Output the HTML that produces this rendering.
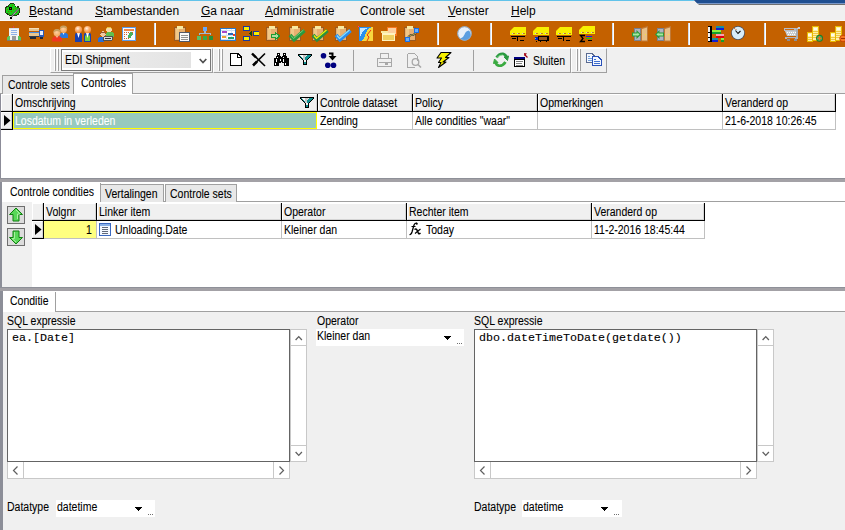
<!DOCTYPE html>
<html><head><meta charset="utf-8">
<style>
*{margin:0;padding:0;box-sizing:border-box}
html,body{width:845px;height:530px;overflow:hidden;background:#f0f0f0;font-family:"Liberation Sans",sans-serif;font-size:10.5px;color:#000;position:relative}
.a{position:absolute}
.t{position:absolute;white-space:nowrap;line-height:1;font-size:12px;transform:scaleX(.875);transform-origin:0 0;margin-top:-2px;-webkit-text-stroke:0.08px currentColor}
.m{position:absolute;white-space:nowrap;line-height:1;font-size:12px;color:#000}
.m u{text-decoration:underline;text-decoration-thickness:1px;text-underline-offset:1px}
.sep{position:absolute;top:23px;width:2px;height:22px;background:#fff;border-left:1px solid #d0dcec}
.hd{position:absolute;background:#f0f0f0;border-top:1px solid #fff;border-left:1px solid #fff;border-right:1px solid #000;border-bottom:1px solid #000}
.vline{position:absolute;width:1px;background:#c0c0c0}
.hline{position:absolute;height:1px;background:#c0c0c0}
</style></head><body>
<!-- title remnants -->
<div class="a" style="left:0;top:0;width:694px;height:1px;background:#61c3ea"></div>
<svg class="a" style="left:690px;top:0" width="155" height="6">
  <polygon points="4,0 155,0 155,5 9,5" fill="#707070"/>
  <polygon points="4,0 155,0 155,4 8,4" fill="#7a98c8"/>
  <polygon points="4,0 155,0 155,3 7,3" fill="#1f4f91"/>
</svg>

<!-- menu bar -->
<div class="a" style="left:0;top:20px;width:845px;height:1px;background:#fafafa"></div>
<div id="menu">
<div class="m" style="left:29px;top:5px"><u>B</u>estand</div>
<div class="m" style="left:95px;top:5px"><u>S</u>tambestanden</div>
<div class="m" style="left:201px;top:5px"><u>G</u>a naar</div>
<div class="m" style="left:265px;top:5px"><u>A</u>dministratie</div>
<div class="m" style="left:360px;top:5px">Controle set</div>
<div class="m" style="left:448px;top:5px"><u>V</u>enster</div>
<div class="m" style="left:511px;top:5px"><u>H</u>elp</div>
</div>

<!-- orange toolbar -->
<div class="a" style="left:0;top:21px;width:845px;height:26px;background:#c46100"></div>
<div class="a" style="left:0;top:47px;width:845px;height:1px;background:#fafafa"></div>
<div class="sep" style="left:154px"></div>
<div class="sep" style="left:437px"></div>
<div class="sep" style="left:490px"></div>
<div class="sep" style="left:612px"></div>
<div class="sep" style="left:688px"></div>
<div class="sep" style="left:764px"></div>
<div id="icons1">
<svg class="a" style="left:0;top:0" width="845" height="48" shape-rendering="crispEdges">
<!-- 1 building -->
<g>
<rect x="9" y="28" width="10" height="12" fill="#f2f2f2"/>
<rect x="9" y="28" width="10" height="1" fill="#d8dce4"/>
<rect x="11" y="30" width="6" height="1" fill="#8fb0e8"/>
<rect x="11" y="32" width="6" height="1" fill="#8fb0e8"/>
<rect x="11" y="34" width="6" height="1" fill="#8fb0e8"/>
<rect x="12" y="36" width="4" height="4" fill="#9a9a9a"/>
<rect x="13" y="26" width="1" height="2" fill="#e04040"/>
<rect x="7" y="37" width="3" height="3" fill="#5cc45c"/>
<rect x="18" y="37" width="3" height="3" fill="#5cc45c"/>
<rect x="8" y="36" width="2" height="1" fill="#5cc45c"/>
<rect x="18" y="36" width="2" height="1" fill="#5cc45c"/>
<rect x="7" y="40" width="14" height="1" fill="#7a7a7a"/>
</g>
<!-- 2 truck -->
<g>
<rect x="29" y="28" width="10" height="8" fill="#e7c48e"/>
<rect x="29" y="28" width="10" height="1" fill="#f3dcb8"/>
<rect x="29" y="31" width="10" height="1" fill="#c45c00"/>
<rect x="29" y="32" width="10" height="1" fill="#4a8ee0"/>
<rect x="39" y="30" width="5" height="7" fill="#2a5ab8"/>
<rect x="40" y="31" width="3" height="4" fill="#e8eef8"/>
<rect x="29" y="36" width="10" height="1" fill="#303848"/>
<rect x="30" y="37" width="6" height="2" fill="#1e2838"/>
<rect x="40" y="37" width="3" height="2" fill="#1e2838"/>
</g>
<!-- 3 people -->
<defs>
<radialGradient id="hd" cx="0.4" cy="0.35" r="0.7"><stop offset="0" stop-color="#fff4e8"/><stop offset="0.45" stop-color="#ffb070"/><stop offset="1" stop-color="#f08830"/></radialGradient>
<radialGradient id="sk" cx="0.45" cy="0.4" r="0.7"><stop offset="0" stop-color="#ffd0a0"/><stop offset="1" stop-color="#f0a050"/></radialGradient>
</defs>
<g shape-rendering="auto">
<path d="M59.5,38 L59.5,35 Q60,32.5 63.5,32.5 Q67.5,32.5 68,35 L68,38 Z" fill="#2a78e0"/>
<path d="M62.5,32.5 L64.5,32.5 L63.5,35 Z" fill="#e8f0ff"/>
<circle cx="63.5" cy="29.5" r="3.4" fill="url(#sk)"/>
<path d="M59.8,29.5 Q59.5,25.5 63.5,25.5 Q67.5,25.5 67.2,29.5 Q66,27.5 63.5,27.5 Q61,27.5 59.8,29.5Z" fill="#c8a060"/>
<path d="M52,41.5 L52,39 Q52.5,36 57,36 Q61.5,36 62,39 L62,41.5 Z" fill="#f03820"/>
<path d="M56,36 L58,36 L57,38 Z" fill="#f8e0e0"/>
<circle cx="57" cy="33" r="3.4" fill="url(#sk)"/>
<path d="M53.3,33 Q53,29 57,29 Q61,29 60.7,33 Q59.5,31 57,31 Q54.5,31 53.3,33Z" fill="#c8a060"/>
</g>
<!-- 4 two persons -->
<g shape-rendering="auto">
<path d="M75,42 L75,34.5 Q75,33 76.5,33 L80.5,33 Q82,33 82,34.5 L82,42 Z" fill="#1a40b0"/>
<path d="M77,33 L80,33 L78.5,38 Z" fill="#fff"/>
<circle cx="78.5" cy="29.6" r="3.6" fill="url(#hd)"/>
<path d="M84,42 L84,34.5 Q84,33 85.5,33 L89.5,33 Q91,33 91,34.5 L91,42 Z" fill="#1a40b0"/>
<rect x="85" y="35.5" width="5" height="5.5" fill="#70d040"/>
<path d="M86,33 L89,33 L87.5,38 Z" fill="#fff"/>
<circle cx="87.5" cy="29.6" r="3.6" fill="url(#hd)"/>
</g>
<!-- 5 people link -->
<g>
<circle cx="109" cy="29.5" r="3" fill="#f8d8a8"/>
<path d="M106,28 Q109,25 112,28 L112,29 Q109,27 106,29Z" fill="#e8c040"/>
<path d="M106,37 L106,33 Q110,31 114,33 L114,37Z" fill="#60c050"/>
<circle cx="103" cy="34" r="2.8" fill="#f0c8a0"/>
<path d="M100,33 Q103,30 106,33 L106,34 Q103,32 100,34Z" fill="#905838"/>
<path d="M98,42 L98,38 Q101,36 104,38 L104,42Z" fill="#2a70d8"/>
<rect x="103" y="36" width="10" height="5" rx="2" fill="#505050"/>
<rect x="104" y="37" width="8" height="3" rx="1" fill="#d8d8d8"/>
<rect x="105" y="38" width="6" height="1" fill="#303030"/>
</g>
<!-- 6 calendar -->
<g>
<rect x="122" y="27" width="14" height="14" fill="#5a9ae8"/>
<rect x="123" y="28" width="12" height="12" fill="#f8f8ff"/>
<rect x="124" y="29" width="10" height="2" fill="#f08848"/>
<g fill="#d86020">
<rect x="124" y="32" width="1" height="1"/><rect x="126" y="32" width="1" height="1"/><rect x="128" y="32" width="1" height="1"/><rect x="130" y="32" width="1" height="1"/><rect x="132" y="32" width="1" height="1"/>
<rect x="124" y="34" width="1" height="1"/><rect x="126" y="34" width="1" height="1"/><rect x="132" y="34" width="1" height="1"/>
<rect x="124" y="36" width="1" height="1"/><rect x="126" y="38" width="1" height="1"/><rect x="124" y="38" width="1" height="1"/><rect x="128" y="38" width="1" height="1"/>
</g>
<circle cx="129.5" cy="36.5" r="1.8" fill="#48b060"/>
<circle cx="131" cy="34" r="1.8" fill="#48b060"/>
</g>
<!-- separator 1 drawn separately -->
<!-- 7 clipboard doc -->
<g>
<rect x="174" y="27" width="12" height="14" fill="#9a5a20"/>
<rect x="175" y="28" width="10" height="12" fill="#e8b070"/><rect x="176" y="29" width="3" height="10" fill="#f0c888"/>
<rect x="177" y="26" width="6" height="3" fill="#f8e8a0"/>
<rect x="179" y="32" width="11" height="10" fill="#505868"/>
<rect x="180" y="33" width="9" height="8" fill="#fafafa"/>
<rect x="181" y="35" width="7" height="1" fill="#909090"/>
<rect x="181" y="37" width="7" height="1" fill="#909090"/>
<rect x="181" y="39" width="7" height="1" fill="#909090"/>
</g>
<!-- 8 org chart -->
<g>
<rect x="203" y="27" width="4" height="4" fill="#6aa8f8"/>
<rect x="204" y="31" width="2" height="2" fill="#a0b8d0"/>
<rect x="199" y="33" width="12" height="1" fill="#a0b8d0"/>
<rect x="199" y="33" width="1" height="2" fill="#a0b8d0"/>
<rect x="210" y="33" width="1" height="2" fill="#a0b8d0"/>
<rect x="197" y="36" width="4" height="4" fill="#58c068"/>
<rect x="203" y="36" width="4" height="4" fill="#38a848"/>
<rect x="209" y="36" width="4" height="4" fill="#289038"/>
</g>
<!-- 9 schedule -->
<g>
<rect x="220" y="28" width="16" height="13" fill="#2a78c8"/>
<rect x="221" y="29" width="14" height="11" fill="#ffffff"/>
<rect x="221" y="30" width="14" height="1" fill="#c8dcf0"/>
<rect x="221" y="35" width="14" height="1" fill="#c8dcf0"/><rect x="221" y="39" width="14" height="1" fill="#c8dcf0"/><rect x="226" y="29" width="1" height="11" fill="#d8e6f4"/><rect x="231" y="29" width="1" height="11" fill="#d8e6f4"/>
<rect x="222" y="31" width="5" height="2" fill="#a848c8"/>
<rect x="228" y="33" width="5" height="2" fill="#2a68b8"/>
<rect x="233" y="34" width="2" height="2" fill="#f04020"/>
<rect x="222" y="36" width="4" height="2" fill="#f0a030"/>
<rect x="228" y="37" width="6" height="2" fill="#20a068"/>
</g>
<!-- 10 yellow blocks -->
<g>
<rect x="243" y="26" width="7" height="5" fill="#1a38a0"/>
<rect x="244" y="27" width="5" height="3" fill="#f8f000"/>
<rect x="243" y="36" width="7" height="5" fill="#1a38a0"/>
<rect x="244" y="37" width="5" height="3" fill="#f8f000"/>
<rect x="253" y="31" width="6" height="5" fill="#1a38a0"/>
<rect x="254" y="32" width="5" height="3" fill="#f8f000"/>
<path d="M249,33.5 L252,31 L252,36 Z" fill="#104810"/>
</g>
<!-- 11 clipboard arrow -->
<g>
<rect x="266" y="27" width="12" height="14" fill="#9a5a20"/>
<rect x="267" y="28" width="10" height="12" fill="#e8b070"/><rect x="268" y="29" width="3" height="10" fill="#f0c888"/>
<rect x="269" y="26" width="6" height="3" fill="#f8e8a0"/>
<path d="M271,34 L275,34 L275,32 L281,36 L275,40.5 L275,38 L271,38 Z" fill="#1e9a30"/>
<path d="M272,35 L276,35 L276,34 L279,36 L276,38 L276,37 L272,37 Z" fill="#a8e0a0"/>
</g>
<!-- 12-14 clipboard checks -->
<g>
<rect x="289" y="27" width="12" height="14" fill="#9a5a20"/>
<rect x="290" y="28" width="10" height="12" fill="#e8b070"/><rect x="291" y="29" width="3" height="10" fill="#f0c888"/>
<rect x="292" y="26" width="6" height="3" fill="#f8e8a0"/>
<path d="M290,35 L294,39.5 L304.5,30.5" stroke="#2a9a40" stroke-width="3.8" fill="none" shape-rendering="auto"/>
<path d="M291,35.5 L293.5,38.5 L303.5,30" stroke="#78d078" stroke-width="1" fill="none" shape-rendering="auto"/>
</g>
<g>
<rect x="312" y="27" width="12" height="14" fill="#9a5a20"/>
<rect x="313" y="28" width="10" height="12" fill="#e8b070"/><rect x="314" y="29" width="3" height="10" fill="#f0c888"/>
<rect x="315" y="26" width="6" height="3" fill="#f8e8a0"/>
<path d="M313,35 L317,39.5 L327.5,30.5" stroke="#2a9040" stroke-width="3.8" fill="none" shape-rendering="auto"/>
<path d="M314,35.5 L316.5,38.5 L326.5,30" stroke="#f8f000" stroke-width="1.2" fill="none" shape-rendering="auto"/>
</g>
<g>
<rect x="335" y="27" width="12" height="14" fill="#9a5a20"/>
<rect x="336" y="28" width="10" height="12" fill="#e8b070"/><rect x="337" y="29" width="3" height="10" fill="#f0c888"/>
<rect x="338" y="26" width="6" height="3" fill="#f8e8a0"/>
<path d="M336,35 L340,39.5 L350.5,30.5" stroke="#2a8ef0" stroke-width="3.8" fill="none" shape-rendering="auto"/>
<path d="M337,35.5 L339.5,38.5 L349.5,30" stroke="#90e0f8" stroke-width="1.2" fill="none" shape-rendering="auto"/>
</g>
<!-- 15 blue/yellow -->
<g>
<rect x="359" y="27" width="14" height="14" fill="#f8d840"/>
<path d="M359,27 L373,27 Q367,28 366,33 Q364,39 362,41 L359,41 Z" fill="#2a90f0"/>
<path d="M360,28 L368,28 Q364,29 362,33 L360,37 Z" fill="#c8e8ff"/>
<path d="M371,30 L367,35 L369,37 L367,41" stroke="#f03010" stroke-width="1" fill="none" shape-rendering="auto"/>
<rect x="358" y="26" width="1" height="1" fill="#ff20c0"/>
</g>
<!-- 16 folder -->
<g>
<rect x="387" y="27" width="10" height="9" fill="#f87820"/>
<rect x="388" y="28" width="8" height="6" fill="#fcd0a0"/>
<rect x="381" y="31" width="7" height="2" fill="#f8e8a0"/>
<rect x="382" y="33" width="13" height="8" fill="#fff4c0"/>
<rect x="383" y="35" width="11" height="5" fill="#f0d060"/>
</g>
<!-- 17 clipboard path -->
<g>
<rect x="404" y="27" width="12" height="14" fill="#9a5a20"/>
<rect x="405" y="28" width="10" height="12" fill="#e8b070"/><rect x="406" y="29" width="3" height="10" fill="#f0c888"/>
<rect x="407" y="26" width="6" height="3" fill="#f8e8a0"/>
<path d="M408,37 L411,35 L413,35 L416,33" stroke="#283048" stroke-width="2" fill="none" shape-rendering="auto"/>
<path d="M408,37 L411,35 L413,35 L416,33" stroke="#f8d030" stroke-width="0.8" fill="none" shape-rendering="auto"/>
<rect x="405" y="37" width="5" height="5" fill="#1a70e8"/>
<rect x="406" y="38" width="3" height="3" fill="#6ab0f8"/>
<rect x="414" y="28" width="5" height="5" fill="#1a70e8"/>
<rect x="415" y="29" width="3" height="3" fill="#6ab0f8"/>
</g>
<!-- 18 globe -->
<g shape-rendering="auto">
<circle cx="464.5" cy="33.5" r="7.2" fill="#a8b8c8"/>
<circle cx="464.5" cy="33.5" r="6.5" fill="#e8f0f8"/>
<path d="M460.5,38.5 Q463.5,37.5 464.5,34.5 Q465.5,31 469,30.5 Q471.5,33.5 470.5,37 Q468.5,40.3 464.5,40.5 Q462,40.2 460.5,38.5Z" fill="#5a9ee0"/><circle cx="464.5" cy="33.5" r="6.8" fill="none" stroke="#90a8c0" stroke-width="0.8"/>
</g>
</svg>
<svg class="a" style="left:0;top:0" width="845" height="48" shape-rendering="crispEdges">
<!-- 19 awning table -->
<g>
<path d="M510,31 L514,27 L526,27 L526,35 L510,35 Z" fill="#f8f000" shape-rendering="auto"/>
<rect x="512" y="33" width="1" height="1" fill="#c8c8e8"/><rect x="513" y="33" width="2" height="1" fill="#c87820"/>
<rect x="517" y="33" width="1" height="1" fill="#c8c8e8"/><rect x="518" y="33" width="2" height="1" fill="#c87820"/>
<rect x="522" y="33" width="1" height="1" fill="#c8c8e8"/><rect x="523" y="33" width="2" height="1" fill="#c87820"/>
<rect x="511" y="36" width="14" height="1" fill="#000"/>
<rect x="512" y="38" width="4" height="1" fill="#000"/>
<rect x="517" y="36" width="1" height="5" fill="#000"/>
<rect x="520" y="40" width="4" height="1" fill="#000"/>
</g>
<!-- 20 awning truck -->
<g>
<path d="M533,31 L537,27 L549,27 L549,35 L533,35 Z" fill="#f8f000" shape-rendering="auto"/>
<rect x="535" y="33" width="1" height="1" fill="#c8c8e8"/><rect x="536" y="33" width="2" height="1" fill="#c87820"/>
<rect x="540" y="33" width="1" height="1" fill="#c8c8e8"/><rect x="541" y="33" width="2" height="1" fill="#c87820"/>
<rect x="545" y="33" width="1" height="1" fill="#c8c8e8"/><rect x="546" y="33" width="2" height="1" fill="#c87820"/>
<rect x="538" y="36" width="11" height="5" fill="#000"/>
<rect x="539" y="37" width="8" height="3" fill="#9a5820"/>
<rect x="535" y="37" width="3" height="3" fill="#0a20c0"/>
<rect x="535" y="38" width="1" height="1" fill="#20e0f0"/>
<rect x="536" y="41" width="1" height="1" fill="#000"/><rect x="540" y="41" width="1" height="1" fill="#000"/><rect x="546" y="41" width="1" height="1" fill="#000"/>
</g>
<!-- 21 awning table -->
<g>
<path d="M556,31 L560,27 L572,27 L572,35 L556,35 Z" fill="#f8f000" shape-rendering="auto"/>
<rect x="558" y="33" width="1" height="1" fill="#c8c8e8"/><rect x="559" y="33" width="2" height="1" fill="#c87820"/>
<rect x="563" y="33" width="1" height="1" fill="#c8c8e8"/><rect x="564" y="33" width="2" height="1" fill="#c87820"/>
<rect x="568" y="33" width="1" height="1" fill="#c8c8e8"/><rect x="569" y="33" width="2" height="1" fill="#c87820"/>
<rect x="557" y="36" width="14" height="1" fill="#000"/>
<rect x="558" y="38" width="4" height="1" fill="#000"/>
<rect x="563" y="36" width="1" height="5" fill="#000"/>
<rect x="566" y="40" width="4" height="1" fill="#000"/>
</g>
<!-- 22 awning sigma -->
<g>
<path d="M579,30 L583,26 L595,26 L595,34 L579,34 Z" fill="#f8f000" shape-rendering="auto"/>
<rect x="581" y="32" width="1" height="1" fill="#c8c8e8"/><rect x="582" y="32" width="2" height="1" fill="#c87820"/>
<rect x="586" y="32" width="1" height="1" fill="#c8c8e8"/><rect x="587" y="32" width="2" height="1" fill="#c87820"/>
<rect x="591" y="32" width="1" height="1" fill="#c8c8e8"/><rect x="592" y="32" width="2" height="1" fill="#c87820"/>
<path d="M585,35.5 L580.5,35.5 L583,38.5 L580.5,41.5 L585,41.5" stroke="#000" stroke-width="1.3" fill="none" shape-rendering="auto"/>
<rect x="586" y="36" width="6" height="1" fill="#1020f0"/>
<rect x="586" y="38" width="6" height="1" fill="#10d010"/>
<rect x="588" y="40" width="4" height="1" fill="#000"/>
</g>
<!-- 23 door in -->
<g>
<rect x="634" y="28" width="7" height="13" fill="#7a8290"/>
<rect x="635" y="29" width="5" height="11" fill="#b0b4c0"/>
<path d="M641,28 L648,26 L648,41.5 L641,41.5 Z" fill="#c07a38" shape-rendering="auto"/>
<path d="M642,29 L647,27.5 L647,40.5 L642,40.5 Z" fill="#e8c088" shape-rendering="auto"/>
<rect x="645" y="34" width="1" height="1" fill="#f8e040"/>
<path d="M632,32.5 L636.5,32.5 L636.5,30 L641,34.5 L636.5,39 L636.5,36.5 L632,36.5 Z" fill="#2a9a3a" shape-rendering="auto"/>
<path d="M633,33.5 L637.5,33.5 L637.5,32.5 L639.5,34.5 L637.5,36 L637.5,35.5 L633,35.5 Z" fill="#a8e8a0" shape-rendering="auto"/>
</g>
<!-- 24 door out -->
<g>
<rect x="657" y="28" width="7" height="13" fill="#7a8290"/>
<rect x="658" y="29" width="5" height="11" fill="#b0b4c0"/>
<path d="M664,28 L671,26 L671,41.5 L664,41.5 Z" fill="#c07a38" shape-rendering="auto"/>
<path d="M665,29 L670,27.5 L670,40.5 L665,40.5 Z" fill="#e8c088" shape-rendering="auto"/>
<rect x="668" y="34" width="1" height="1" fill="#f8e040"/>
<path d="M664,32.5 L659.5,32.5 L659.5,30 L655,34.5 L659.5,39 L659.5,36.5 L664,36.5 Z" fill="#2a9a3a" shape-rendering="auto"/>
<path d="M663,33.5 L658.5,33.5 L658.5,32.5 L656.5,34.5 L658.5,36 L658.5,35.5 L663,35.5 Z" fill="#a8e8a0" shape-rendering="auto"/>
</g>
<!-- 25 gantt -->
<g>
<rect x="708" y="26" width="4" height="16" fill="#000"/>
<rect x="708" y="27" width="2" height="14" fill="#f0f0f0"/>
<rect x="708" y="32" width="2" height="1" fill="#000"/><rect x="708" y="37" width="2" height="1" fill="#000"/>
<rect x="716" y="26" width="8" height="2" fill="#1890a0"/><rect x="716" y="28" width="8" height="2" fill="#1020d0"/>
<rect x="712" y="30" width="9" height="2" fill="#90f040"/><rect x="712" y="32" width="9" height="2" fill="#10a030"/>
<rect x="716" y="34" width="8" height="2" fill="#f8a0b0"/><rect x="716" y="36" width="8" height="2" fill="#e00010"/>
<rect x="712" y="38" width="6" height="2" fill="#1890a0"/><rect x="712" y="40" width="6" height="2" fill="#1020d0"/>
<rect x="721" y="38" width="3" height="2" fill="#90f040"/><rect x="721" y="40" width="3" height="2" fill="#10a030"/>
</g>
<!-- 26 clock -->
<g shape-rendering="auto">
<circle cx="738" cy="33" r="7" fill="#485060"/>
<circle cx="738" cy="33" r="6.2" fill="#d8ecf8"/>
<path d="M735.5,30.5 L738,33.5 L740.5,31" stroke="#101010" stroke-width="1.1" fill="none"/>
<circle cx="734.5" cy="28.5" r="0.6" fill="#e06010"/>
<circle cx="736" cy="29.5" r="0.6" fill="#e06010"/>
</g>
<!-- 27 cart -->
<g shape-rendering="crispEdges">
<rect x="784" y="28" width="12" height="3" fill="#b8bcc4"/>
<rect x="785" y="29" width="9" height="1" fill="#d06a10"/>
<path d="M785,31 L797,31 L797,36 L787,36 Z" fill="#c8ccd0" shape-rendering="auto"/>
<g fill="#ffffff"><rect x="787" y="32" width="1" height="1"/><rect x="789" y="32" width="1" height="1"/><rect x="791" y="32" width="1" height="1"/><rect x="793" y="32" width="1" height="1"/><rect x="795" y="32" width="1" height="1"/>
<rect x="788" y="34" width="1" height="1"/><rect x="790" y="34" width="1" height="1"/><rect x="792" y="34" width="1" height="1"/><rect x="794" y="34" width="1" height="1"/></g>
<rect x="796" y="28" width="2" height="10" fill="#a8acb4"/>
<rect x="797" y="27" width="3" height="2" fill="#c8ccd4"/>
<rect x="797" y="27" width="1" height="1" fill="#e07020"/>
<rect x="785" y="37" width="13" height="2" fill="#b0b4bc"/>
<rect x="787" y="38" width="8" height="1" fill="#d06a10"/>
<rect x="787" y="39" width="3" height="2" fill="#8a8e98"/>
<rect x="794" y="39" width="3" height="2" fill="#8a8e98"/>
</g>
<!-- 28 coins green -->
<g>
<rect x="812" y="26" width="7" height="15" fill="#e8b800"/>
<rect x="813" y="27" width="5" height="13" fill="#fff0a8"/>
<rect x="814" y="28" width="3" height="2" fill="#fffce8"/>
<rect x="813" y="31" width="5" height="1" fill="#f0c840"/><rect x="813" y="33" width="5" height="1" fill="#f0c840"/><rect x="813" y="35" width="5" height="1" fill="#f0c840"/><rect x="813" y="37" width="5" height="1" fill="#f0c840"/>
<rect x="807" y="32" width="6" height="10" fill="#e8b800"/>
<rect x="808" y="33" width="4" height="8" fill="#fff0a8"/>
<rect x="808" y="34" width="3" height="2" fill="#fffce8"/>
<rect x="808" y="37" width="4" height="1" fill="#f0c840"/><rect x="808" y="39" width="4" height="1" fill="#f0c840"/>
</g>
<g shape-rendering="auto">
<circle cx="819.5" cy="38.3" r="3.5" fill="#1a7a2a"/>
<circle cx="819.5" cy="38.3" r="2.6" fill="#48a858"/>
<path d="M819.5,36.3 L819.5,40.3 M817.5,38.3 L821.5,38.3" stroke="#f07020" stroke-width="1.2"/>
</g>
<!-- 29 coins orange -->
<g>
<rect x="835" y="26" width="7" height="15" fill="#e8b800"/>
<rect x="836" y="27" width="5" height="13" fill="#fff0a8"/>
<rect x="837" y="28" width="3" height="2" fill="#fffce8"/>
<rect x="836" y="31" width="5" height="1" fill="#f0c840"/><rect x="836" y="33" width="5" height="1" fill="#f0c840"/><rect x="836" y="35" width="5" height="1" fill="#f0c840"/><rect x="836" y="37" width="5" height="1" fill="#f0c840"/>
<rect x="830" y="32" width="6" height="10" fill="#e8b800"/>
<rect x="831" y="33" width="4" height="8" fill="#fff0a8"/>
<rect x="831" y="34" width="3" height="2" fill="#fffce8"/>
<rect x="831" y="37" width="4" height="1" fill="#f0c840"/><rect x="831" y="39" width="4" height="1" fill="#f0c840"/>
</g>
<g shape-rendering="auto">
<circle cx="843" cy="38.5" r="3.6" fill="#c84000"/>
<circle cx="843" cy="38.5" r="2.7" fill="#f87820"/>
<path d="M841,38.5 L845,38.5" stroke="#a83000" stroke-width="1"/>
</g>
<!-- menu app icon (maple leaf) -->
<g shape-rendering="crispEdges">
<path d="M9,4 L10,4 L10,3 L14,3 L14,4 L15,4 L15,6 L16,6 L16,7 L17,7 L17,6 L19,6 L19,8 L20,8 L20,13 L19,13 L19,15 L17,15 L17,16 L13,16 L13,15 L12,15 L12,16 L9,16 L9,15 L7,15 L7,14 L6,14 L6,13 L5,13 L5,7 L6,7 L6,6 L8,6 L8,5 L9,5 Z" fill="#203a10"/>
<path d="M10,4 L14,4 L14,5 L15,5 L15,7 L17,7 L17,8 L19,8 L19,13 L18,13 L18,14 L17,14 L17,15 L13,15 L13,14 L12,14 L12,15 L9,15 L9,14 L8,14 L8,13 L7,13 L7,13 L6,13 L6,8 L7,8 L7,7 L9,7 L9,5 L10,5 Z" fill="#18d018"/>
<rect x="9" y="7" width="3" height="3" fill="#000"/>
<rect x="10" y="8" width="1" height="1" fill="#806000"/>
<g fill="#7a6a00">
<rect x="8" y="11" width="1" height="1"/><rect x="11" y="11" width="1" height="1"/><rect x="13" y="9" width="1" height="1"/>
<rect x="7" y="9" width="1" height="1"/><rect x="12" y="5" width="1" height="1"/><rect x="16" y="12" width="1" height="1"/>
<rect x="9" y="13" width="1" height="1"/><rect x="15" y="8" width="1" height="1"/><rect x="17" y="10" width="1" height="1"/>
</g>
</g>
<g shape-rendering="auto">
<path d="M11.5,16.5 L18.5,9" stroke="#404040" stroke-width="1.8"/>
<path d="M11.5,16.5 L18.5,9" stroke="#f0f0f8" stroke-width="0.9" stroke-dasharray="1.2,0.5"/>
</g>
<rect x="10" y="17" width="2" height="2" fill="#000"/>
</svg>
</div>

<!-- toolbar 2 -->
<div class="a" style="left:50px;top:48px;width:163px;height:25px;border-top:1px solid #fff;border-left:1px solid #fff;border-bottom:1px solid #a0a0a0;border-right:1px solid #a0a0a0"></div>
<div class="a" style="left:54px;top:49px;width:1px;height:21px;background:#fff"></div><div class="a" style="left:55px;top:49px;width:1px;height:22px;background:#a0a0a0"></div>
<div class="a" style="left:57px;top:49px;width:1px;height:21px;background:#fff"></div><div class="a" style="left:58px;top:49px;width:1px;height:22px;background:#a0a0a0"></div>
<div class="a" style="left:61px;top:49px;width:150px;height:22px;border:1px solid #7a7a7a;background:#fff"></div>
<div class="a" style="left:63px;top:52px;width:128px;height:16px;background:linear-gradient(90deg,#f0f0f0,#e3e3e3)"></div>
<div class="t" style="left:65px;top:56px">EDI Shipment</div>
<svg class="a" style="left:199px;top:58px" width="9" height="7"><path d="M0.7,1 L4,4.6 L7.3,1" stroke="#505050" stroke-width="1.7" fill="none"/></svg>

<div class="a" style="left:213px;top:48px;width:358px;height:25px;border-top:1px solid #fff;border-left:1px solid #fff;border-bottom:1px solid #a0a0a0;border-right:1px solid #a0a0a0"></div>
<div class="a" style="left:218px;top:49px;width:1px;height:21px;background:#fff"></div><div class="a" style="left:219px;top:49px;width:1px;height:22px;background:#a0a0a0"></div>
<div class="a" style="left:221px;top:49px;width:1px;height:21px;background:#fff"></div><div class="a" style="left:222px;top:49px;width:1px;height:22px;background:#a0a0a0"></div>
<div class="a" style="left:353px;top:50px;width:1px;height:21px;background:#a0a0a0"></div>
<div class="a" style="left:473px;top:50px;width:1px;height:21px;background:#a0a0a0"></div>
<div class="t" style="left:533px;top:57px">Sluiten</div>

<div class="a" style="left:571px;top:48px;width:36px;height:25px;border-top:1px solid #fff;border-left:1px solid #fff;border-bottom:1px solid #a0a0a0;border-right:1px solid #a0a0a0"></div>
<div class="a" style="left:576px;top:49px;width:1px;height:21px;background:#fff"></div><div class="a" style="left:577px;top:49px;width:1px;height:22px;background:#a0a0a0"></div>
<div class="a" style="left:579px;top:49px;width:1px;height:21px;background:#fff"></div><div class="a" style="left:580px;top:49px;width:1px;height:22px;background:#a0a0a0"></div>
<div id="icons2">
<svg class="a" style="left:0;top:0" width="845" height="80" shape-rendering="crispEdges">
<!-- new doc -->
<path d="M230.5,53.5 L238,53.5 L241.5,57 L241.5,65.5 L230.5,65.5 Z" fill="#fff" stroke="#000" stroke-width="1"/>
<path d="M237.5,53.5 L237.5,57.5 L241.5,57.5" fill="none" stroke="#000" stroke-width="1"/>
<!-- X -->
<g shape-rendering="auto">
<path d="M252.5,54 L265,66" stroke="#000" stroke-width="1.6"/>
<path d="M252,53.5 L256,57.5" stroke="#000" stroke-width="2.4"/>
<path d="M265,53.5 L253.5,65" stroke="#000" stroke-width="1.6"/>
<path d="M257,61.5 L253,65.5" stroke="#000" stroke-width="2.6"/>
</g>
<!-- binoculars -->
<g fill="#000">
<rect x="277" y="53" width="3" height="3"/><rect x="283" y="53" width="3" height="3"/>
<rect x="276" y="56" width="5" height="2"/><rect x="282" y="56" width="5" height="2"/>
<rect x="274" y="58" width="7" height="5"/><rect x="282" y="58" width="7" height="5"/><rect x="284" y="63" width="5" height="3"/>
<rect x="281" y="57" width="1" height="5"/>
<rect x="274" y="63" width="5" height="3"/>
</g>
<g fill="#fff">
<rect x="278" y="54" width="1" height="1"/><rect x="284" y="54" width="1" height="1"/>
<rect x="277" y="57" width="1" height="1"/><rect x="283" y="57" width="1" height="1"/>
<rect x="276" y="59" width="1" height="3"/><rect x="280" y="59" width="1" height="2"/><rect x="283" y="59" width="1" height="3"/>
<rect x="275" y="63" width="1" height="2"/><rect x="285" y="63" width="1" height="2"/>
</g>
<!-- filter -->
<g><rect x="298" y="54" width="14" height="1" fill="#000"/><rect x="298" y="55" width="1" height="1" fill="#000"/><rect x="299" y="55" width="1" height="1" fill="#109090"/><rect x="300" y="55" width="3" height="1" fill="#fafafa"/><rect x="303" y="55" width="3" height="1" fill="#c8c8c8"/><rect x="306" y="55" width="1" height="1" fill="#f0e8e8"/><rect x="307" y="55" width="4" height="1" fill="#109090"/><rect x="311" y="55" width="1" height="1" fill="#000"/><rect x="299" y="56" width="1" height="1" fill="#000"/><rect x="300" y="56" width="1" height="1" fill="#109090"/><rect x="301" y="56" width="2" height="1" fill="#fafafa"/><rect x="303" y="56" width="2" height="1" fill="#c8c8c8"/><rect x="305" y="56" width="1" height="1" fill="#e8e0e0"/><rect x="306" y="56" width="4" height="1" fill="#109090"/><rect x="310" y="56" width="1" height="1" fill="#000"/><rect x="300" y="57" width="1" height="1" fill="#000"/><rect x="301" y="57" width="1" height="1" fill="#109090"/><rect x="302" y="57" width="1" height="1" fill="#fafafa"/><rect x="303" y="57" width="2" height="1" fill="#c8c8c8"/><rect x="305" y="57" width="4" height="1" fill="#109090"/><rect x="309" y="57" width="1" height="1" fill="#000"/><rect x="301" y="58" width="1" height="1" fill="#000"/><rect x="302" y="58" width="1" height="1" fill="#109090"/><rect x="303" y="58" width="2" height="1" fill="#c8c8c8"/><rect x="305" y="58" width="3" height="1" fill="#109090"/><rect x="308" y="58" width="1" height="1" fill="#000"/><rect x="302" y="59" width="1" height="1" fill="#000"/><rect x="303" y="59" width="2" height="1" fill="#d0d0d0"/><rect x="305" y="59" width="2" height="1" fill="#109090"/><rect x="307" y="59" width="1" height="1" fill="#000"/><rect x="303" y="60" width="1" height="1" fill="#000"/><rect x="304" y="60" width="2" height="1" fill="#f8f8f8"/><rect x="306" y="60" width="1" height="1" fill="#000"/><rect x="303" y="61" width="1" height="1" fill="#000"/><rect x="304" y="61" width="2" height="1" fill="#f0f0f0"/><rect x="306" y="61" width="1" height="1" fill="#000"/><rect x="303" y="62" width="1" height="1" fill="#000"/><rect x="304" y="62" width="2" height="1" fill="#109090"/><rect x="306" y="62" width="1" height="1" fill="#000"/><rect x="303" y="63" width="1" height="1" fill="#000"/><rect x="304" y="63" width="2" height="1" fill="#109090"/><rect x="306" y="63" width="1" height="1" fill="#000"/><rect x="303" y="64" width="4" height="1" fill="#000"/></g>
<!-- dots arrow -->
<g shape-rendering="auto">
<circle cx="323.5" cy="55.7" r="2.8" fill="#000080"/>
<circle cx="327.8" cy="65.2" r="2.8" fill="#000080"/>
<circle cx="333.5" cy="65.2" r="2.8" fill="#000080"/>
<path d="M329,52.5 L333.5,52.5 L333.5,56 L336.5,56 L332.5,60.5 L328.5,56 L331.5,56 L331.5,54.5 L329,54.5 Z" fill="#000"/>
</g>
<!-- separator handled in html -->
<!-- printer gray -->
<g fill="none" stroke="#a8a8a8" stroke-width="1">
<path d="M380.5,53.5 L388.5,53.5 L388.5,58.5 L380.5,58.5 Z"/>
<path d="M377.5,58.5 L391.5,58.5 L391.5,66.5 L377.5,66.5 Z"/>
<path d="M378.5,62.5 L390.5,62.5"/>
</g>
<rect x="385" y="63" width="3" height="2" fill="#a8a8a8"/>
<!-- preview gray -->
<g fill="none" stroke="#a8a8a8" stroke-width="1">
<path d="M407.5,53.5 L414.5,53.5 L417.5,56.5 L417.5,61"/>
<path d="M407.5,53.5 L407.5,67.5 L415,67.5"/>
</g>
<g shape-rendering="auto">
<circle cx="415.5" cy="62" r="3.3" fill="none" stroke="#a8a8a8" stroke-width="1.3"/>
<path d="M418,64.5 L421,67.5" stroke="#a8a8a8" stroke-width="1.6"/>
</g>
<!-- lightning -->
<g shape-rendering="auto">
<path d="M441,52.5 L451,52.5 L445.5,57.5 L449,57.5 L443,62 L446,62 L438.5,67.5 L441,62.5 L438.5,62.5 L441.5,58 L437,58 Z" fill="#f8f000" stroke="#000" stroke-width="1.1" stroke-linejoin="round"/>
</g>
<!-- refresh -->
<g shape-rendering="auto">
<path d="M496.5,57.5 Q499,53.5 503,53.8 Q506,54.5 506.5,57.5" fill="none" stroke="#2a9a40" stroke-width="2.6"/>
<path d="M504,57 L508.5,56 L507.5,60.5 Z" fill="#2a9a40" stroke="#2a9a40" stroke-width="1"/>
<path d="M505.5,62 Q503,66 499,65.8 Q496,65 495.5,62" fill="none" stroke="#3aaa40" stroke-width="2.6"/>
<path d="M498,62.5 L493.5,63.5 L494.5,59 Z" fill="#3aaa40" stroke="#3aaa40" stroke-width="1"/>
<path d="M497,57.5 Q499,54.8 503,55" fill="none" stroke="#90e090" stroke-width="0.8"/>
</g>
<!-- window close -->
<g>
<rect x="514" y="57" width="11" height="10" fill="#000"/>
<rect x="515" y="60" width="9" height="6" fill="#fff"/>
<rect x="514" y="57" width="11" height="2" fill="#000080"/>
<rect x="516" y="61" width="7" height="1" fill="#808080"/>
<rect x="516" y="63" width="6" height="1" fill="#808080"/>
<rect x="516" y="65" width="7" height="1" fill="#808080"/>
</g>
<g shape-rendering="auto">
<path d="M527.5,57.5 L524.5,54.5" stroke="#a00010" stroke-width="1.3"/>
<path d="M524,53 L527,53.5 L524.5,56 Z" fill="#a00010"/>
</g>
<!-- copy -->
<g>
<path d="M586.5,53.5 L592,53.5 L595,56.5 L595,62.5 L586.5,62.5 Z" fill="#f4f8ff" stroke="#5a6a90" stroke-width="1"/>
<rect x="588" y="56" width="2" height="1" fill="#70a0e0"/>
<rect x="588" y="58" width="5" height="1" fill="#70a0e0"/>
<rect x="588" y="60" width="5" height="1" fill="#70a0e0"/>
<path d="M592.5,56.5 L598,56.5 L601,59.5 L601,65.5 L592.5,65.5 Z" fill="#f4f8ff" stroke="#2850b8" stroke-width="1"/>
<rect x="594" y="59" width="2" height="1" fill="#4070d0"/>
<rect x="594" y="61" width="6" height="1" fill="#4070d0"/>
<rect x="594" y="63" width="6" height="1" fill="#4070d0"/>
</g>
</svg>
</div>

<!-- left MDI edge -->
<div class="a" style="left:0;top:94px;width:1px;height:436px;background:#8c8c98"></div>

<!-- tabs 1 -->
<div class="a" style="left:0;top:93px;width:845px;height:1px;background:#a0a0a0"></div>
<div class="a" style="left:2px;top:75px;width:72px;height:19px;border:1px solid #a0a0a0;border-bottom:none;background:#e8e8e8"></div>
<div class="t" style="left:8px;top:81px">Controle sets</div>
<div class="a" style="left:73px;top:73px;width:60px;height:21px;border:1px solid #a0a0a0;border-bottom:none;background:#fff"></div>
<div class="t" style="left:81px;top:79px">Controles</div>

<!-- grid 1 -->
<div class="a" style="left:1px;top:94px;width:844px;height:84px;background:#fff"></div>
<div id="grid1">
<div class="a" style="left:1px;top:94px;width:11px;height:17px;background:#f0f0f0;border-top:1px solid #fff;border-left:1px solid #fff;border-right:1px solid #d4d4d4;border-bottom:1px solid #d4d4d4"></div><div class="a" style="left:12px;top:94px;width:1px;height:18px;background:#000"></div><div class="a" style="left:1px;top:111px;width:12px;height:1px;background:#000"></div>
<div class="a" style="left:13px;top:94px;width:304px;height:17px;background:#f0f0f0;border-top:1px solid #fff;border-left:1px solid #fff;border-right:1px solid #d4d4d4;border-bottom:1px solid #d4d4d4"></div><div class="a" style="left:317px;top:94px;width:1px;height:18px;background:#000"></div><div class="a" style="left:13px;top:111px;width:305px;height:1px;background:#000"></div><div class="t" style="left:15px;top:99px">Omschrijving</div>
<div class="a" style="left:318px;top:94px;width:94px;height:17px;background:#f0f0f0;border-top:1px solid #fff;border-left:1px solid #fff;border-right:1px solid #d4d4d4;border-bottom:1px solid #d4d4d4"></div><div class="a" style="left:412px;top:94px;width:1px;height:18px;background:#000"></div><div class="a" style="left:318px;top:111px;width:95px;height:1px;background:#000"></div><div class="t" style="left:320px;top:99px">Controle dataset</div>
<div class="a" style="left:413px;top:94px;width:124px;height:17px;background:#f0f0f0;border-top:1px solid #fff;border-left:1px solid #fff;border-right:1px solid #d4d4d4;border-bottom:1px solid #d4d4d4"></div><div class="a" style="left:537px;top:94px;width:1px;height:18px;background:#000"></div><div class="a" style="left:413px;top:111px;width:125px;height:1px;background:#000"></div><div class="t" style="left:415px;top:99px">Policy</div>
<div class="a" style="left:538px;top:94px;width:184px;height:17px;background:#f0f0f0;border-top:1px solid #fff;border-left:1px solid #fff;border-right:1px solid #d4d4d4;border-bottom:1px solid #d4d4d4"></div><div class="a" style="left:722px;top:94px;width:1px;height:18px;background:#000"></div><div class="a" style="left:538px;top:111px;width:185px;height:1px;background:#000"></div><div class="t" style="left:540px;top:99px">Opmerkingen</div>
<div class="a" style="left:723px;top:94px;width:112px;height:17px;background:#f0f0f0;border-top:1px solid #fff;border-left:1px solid #fff;border-right:1px solid #d4d4d4;border-bottom:1px solid #d4d4d4"></div><div class="a" style="left:835px;top:94px;width:1px;height:18px;background:#000"></div><div class="a" style="left:723px;top:111px;width:113px;height:1px;background:#000"></div><div class="t" style="left:725px;top:99px">Veranderd op</div>
<div class="a" style="left:1px;top:112px;width:11px;height:17px;background:#f0f0f0;border-top:1px solid #fff;border-left:1px solid #fff;border-right:1px solid #d4d4d4;border-bottom:1px solid #d4d4d4"></div><div class="a" style="left:12px;top:112px;width:1px;height:18px;background:#000"></div><div class="a" style="left:1px;top:129px;width:12px;height:1px;background:#000"></div>
<svg class="a" style="left:3px;top:114px" width="9" height="13"><polygon points="1,1 7.5,6.5 1,12" fill="#000"/></svg>
<div class="vline" style="left:412px;top:112px;height:18px"></div>
<div class="vline" style="left:537px;top:112px;height:18px"></div>
<div class="vline" style="left:722px;top:112px;height:18px"></div>
<div class="vline" style="left:835px;top:112px;height:18px"></div>
<div class="hline" style="left:13px;top:129px;width:823px"></div>
<div class="a" style="left:13px;top:112px;width:304px;height:17px;border:1px solid #ffff00;background:#97cabe"></div>
<div class="t" style="left:15px;top:117px;color:#fff">Losdatum in verleden</div>
<div class="t" style="left:320px;top:117px">Zending</div>
<div class="t" style="left:415px;top:117px">Alle condities "waar"</div>
<div class="t" style="left:725px;top:117px">21-6-2018 10:26:45</div>
</div>

<!-- splitter 1 -->
<div class="a" style="left:0;top:178px;width:845px;height:5px;background:#a3a1a6;border-top:1px solid #8e9098;border-bottom:1px solid #8e9098"></div>

<!-- tabs 2 -->
<div class="a" style="left:1px;top:182px;width:844px;height:106px;background:#fff"></div>
<div class="a" style="left:100px;top:201px;width:745px;height:1px;background:#a0a0a0"></div>
<div class="t" style="left:10px;top:188px">Controle condities</div>
<div class="a" style="left:100px;top:184px;width:64px;height:18px;border:1px solid #a0a0a0;border-bottom:none;background:#e8e8e8"></div>
<div class="t" style="left:105px;top:190px">Vertalingen</div>
<div class="a" style="left:165px;top:184px;width:72px;height:18px;border:1px solid #a0a0a0;border-bottom:none;background:#e8e8e8"></div>
<div class="t" style="left:170px;top:190px">Controle sets</div>
<div class="a" style="left:100px;top:183px;width:1px;height:19px;background:#a0a0a0"></div>
<div class="a" style="left:2px;top:202px;width:30px;height:85px;background:#f0f0f0"></div>
<div id="grid2">
<div class="a" style="left:32px;top:203px;width:11px;height:17px;background:#f0f0f0;border-top:1px solid #fff;border-left:1px solid #fff;border-right:1px solid #d4d4d4;border-bottom:1px solid #d4d4d4"></div><div class="a" style="left:43px;top:203px;width:1px;height:18px;background:#000"></div><div class="a" style="left:32px;top:220px;width:12px;height:1px;background:#000"></div>
<div class="a" style="left:44px;top:203px;width:52px;height:17px;background:#f0f0f0;border-top:1px solid #fff;border-left:1px solid #fff;border-right:1px solid #d4d4d4;border-bottom:1px solid #d4d4d4"></div><div class="a" style="left:96px;top:203px;width:1px;height:18px;background:#000"></div><div class="a" style="left:44px;top:220px;width:53px;height:1px;background:#000"></div><div class="t" style="left:46px;top:208px">Volgnr</div>
<div class="a" style="left:97px;top:203px;width:184px;height:17px;background:#f0f0f0;border-top:1px solid #fff;border-left:1px solid #fff;border-right:1px solid #d4d4d4;border-bottom:1px solid #d4d4d4"></div><div class="a" style="left:281px;top:203px;width:1px;height:18px;background:#000"></div><div class="a" style="left:97px;top:220px;width:185px;height:1px;background:#000"></div><div class="t" style="left:99px;top:208px">Linker item</div>
<div class="a" style="left:282px;top:203px;width:124px;height:17px;background:#f0f0f0;border-top:1px solid #fff;border-left:1px solid #fff;border-right:1px solid #d4d4d4;border-bottom:1px solid #d4d4d4"></div><div class="a" style="left:406px;top:203px;width:1px;height:18px;background:#000"></div><div class="a" style="left:282px;top:220px;width:125px;height:1px;background:#000"></div><div class="t" style="left:284px;top:208px">Operator</div>
<div class="a" style="left:407px;top:203px;width:184px;height:17px;background:#f0f0f0;border-top:1px solid #fff;border-left:1px solid #fff;border-right:1px solid #d4d4d4;border-bottom:1px solid #d4d4d4"></div><div class="a" style="left:591px;top:203px;width:1px;height:18px;background:#000"></div><div class="a" style="left:407px;top:220px;width:185px;height:1px;background:#000"></div><div class="t" style="left:409px;top:208px">Rechter item</div>
<div class="a" style="left:592px;top:203px;width:112px;height:17px;background:#f0f0f0;border-top:1px solid #fff;border-left:1px solid #fff;border-right:1px solid #d4d4d4;border-bottom:1px solid #d4d4d4"></div><div class="a" style="left:704px;top:203px;width:1px;height:18px;background:#000"></div><div class="a" style="left:592px;top:220px;width:113px;height:1px;background:#000"></div><div class="t" style="left:594px;top:208px">Veranderd op</div>
<div class="a" style="left:32px;top:221px;width:11px;height:17px;background:#f0f0f0;border-top:1px solid #fff;border-left:1px solid #fff;border-right:1px solid #d4d4d4;border-bottom:1px solid #d4d4d4"></div><div class="a" style="left:43px;top:221px;width:1px;height:18px;background:#000"></div><div class="a" style="left:32px;top:238px;width:12px;height:1px;background:#000"></div>
<svg class="a" style="left:34px;top:223px" width="9" height="13"><polygon points="1,1 7.5,6.5 1,12" fill="#000"/></svg>
<div class="vline" style="left:96px;top:221px;height:18px"></div>
<div class="vline" style="left:281px;top:221px;height:18px"></div>
<div class="vline" style="left:406px;top:221px;height:18px"></div>
<div class="vline" style="left:591px;top:221px;height:18px"></div>
<div class="vline" style="left:704px;top:221px;height:18px"></div>
<div class="hline" style="left:44px;top:238px;width:661px"></div>
<div class="a" style="left:44px;top:221px;width:52px;height:17px;background:#ffff80"></div>
<div class="t" style="left:86px;top:226px">1</div>
<div class="t" style="left:115px;top:226px">Unloading.Date</div>
<div class="t" style="left:284px;top:226px">Kleiner dan</div>
<div class="t" style="left:426px;top:226px">Today</div>
<div class="t" style="left:594px;top:226px">11-2-2016 18:45:44</div>
</div>

<!-- splitter 2 -->
<div class="a" style="left:0;top:287px;width:845px;height:5px;background:#a3a1a6;border-top:1px solid #8e9098;border-bottom:1px solid #8e9098"></div>

<!-- bottom tab -->
<div class="a" style="left:1px;top:291px;width:844px;height:21px;background:#fff"></div>
<div class="a" style="left:55px;top:291px;width:790px;height:1px;background:#fff"></div>
<div class="a" style="left:55px;top:292px;width:1px;height:20px;background:#a0a0a0"></div>
<div class="a" style="left:55px;top:311px;width:790px;height:1px;background:#a0a0a0"></div>
<div class="t" style="left:10px;top:297px">Conditie</div>
<div id="form">
<div class="a" style="left:3px;top:312px;width:842px;height:218px;background:#f0f0f0"></div>
<div class="t" style="left:7px;top:317px">SQL expressie</div>
<div class="a" style="left:7px;top:329px;width:283px;height:133px;background:#fff;border:1px solid #646464"></div><div class="a" style="left:12px;top:331px;font-family:'Liberation Mono',monospace;font-size:11.67px;line-height:14px;white-space:nowrap;color:#000;-webkit-text-stroke:0.1px #000">ea.[Date]</div><div class="a" style="left:290px;top:329px;width:17px;height:133px;background:#fff;border:1px solid #c8c8c8;border-left:1px solid #c8c8c8"></div><div class="a" style="left:290px;top:345px;width:16px;height:1px;background:#c8c8c8"></div><div class="a" style="left:290px;top:445px;width:16px;height:1px;background:#c8c8c8"></div><svg class="a" style="left:295px;top:335px" width="8" height="7"><path d="M0.6,5 L3.75,1.6 L6.9,5" stroke="#606060" stroke-width="1.3" fill="none"/></svg><svg class="a" style="left:295px;top:451px" width="8" height="7"><path d="M0.6,1 L3.75,4.4 L6.9,1" stroke="#606060" stroke-width="1.3" fill="none"/></svg><div class="a" style="left:7px;top:462px;width:283px;height:17px;background:#fff;border:1px solid #c8c8c8;border-top:none"></div><div class="a" style="left:23px;top:462px;width:1px;height:16px;background:#c8c8c8"></div><div class="a" style="left:273px;top:462px;width:1px;height:16px;background:#c8c8c8"></div><svg class="a" style="left:12px;top:466px" width="7" height="10"><path d="M5.5,0.5 L1.5,4.5 L5.5,8.5" stroke="#606060" stroke-width="1.2" fill="none"/></svg><svg class="a" style="left:278px;top:466px" width="7" height="10"><path d="M1.5,0.5 L5.5,4.5 L1.5,8.5" stroke="#606060" stroke-width="1.2" fill="none"/></svg>
<div class="t" style="left:317px;top:317px">Operator</div>
<div class="a" style="left:316px;top:329px;width:148px;height:17px;background:#fff"></div><div class="t" style="left:317px;top:332px">Kleiner dan</div>
<div class="t" style="left:474px;top:317px">SQL expressie</div>
<div class="a" style="left:474px;top:329px;width:283px;height:133px;background:#fff;border:1px solid #646464"></div><div class="a" style="left:479px;top:331px;font-family:'Liberation Mono',monospace;font-size:11.67px;line-height:14px;white-space:nowrap;color:#000;-webkit-text-stroke:0.1px #000">dbo.dateTimeToDate(getdate())</div><div class="a" style="left:757px;top:329px;width:17px;height:133px;background:#fff;border:1px solid #c8c8c8;border-left:1px solid #c8c8c8"></div><div class="a" style="left:757px;top:345px;width:16px;height:1px;background:#c8c8c8"></div><div class="a" style="left:757px;top:445px;width:16px;height:1px;background:#c8c8c8"></div><svg class="a" style="left:762px;top:335px" width="8" height="7"><path d="M0.6,5 L3.75,1.6 L6.9,5" stroke="#606060" stroke-width="1.3" fill="none"/></svg><svg class="a" style="left:762px;top:451px" width="8" height="7"><path d="M0.6,1 L3.75,4.4 L6.9,1" stroke="#606060" stroke-width="1.3" fill="none"/></svg><div class="a" style="left:474px;top:462px;width:283px;height:17px;background:#fff;border:1px solid #c8c8c8;border-top:none"></div><div class="a" style="left:490px;top:462px;width:1px;height:16px;background:#c8c8c8"></div><div class="a" style="left:740px;top:462px;width:1px;height:16px;background:#c8c8c8"></div><svg class="a" style="left:479px;top:466px" width="7" height="10"><path d="M5.5,0.5 L1.5,4.5 L5.5,8.5" stroke="#606060" stroke-width="1.2" fill="none"/></svg><svg class="a" style="left:745px;top:466px" width="7" height="10"><path d="M1.5,0.5 L5.5,4.5 L1.5,8.5" stroke="#606060" stroke-width="1.2" fill="none"/></svg>
<div class="t" style="left:7px;top:503px">Datatype</div>
<div class="a" style="left:56px;top:500px;width:99px;height:17px;background:#fff"></div><div class="t" style="left:57px;top:503px">datetime</div>
<div class="t" style="left:474px;top:503px">Datatype</div>
<div class="a" style="left:522px;top:500px;width:100px;height:17px;background:#fff"></div><div class="t" style="left:523px;top:503px">datetime</div>
</div>


<!-- header filter icon -->
<svg class="a" style="left:0;top:0" width="845" height="130" shape-rendering="crispEdges"><rect x="300" y="97" width="14" height="1" fill="#000"/><rect x="300" y="98" width="1" height="1" fill="#000"/><rect x="301" y="98" width="1" height="1" fill="#109090"/><rect x="302" y="98" width="3" height="1" fill="#fafafa"/><rect x="305" y="98" width="3" height="1" fill="#c8c8c8"/><rect x="308" y="98" width="1" height="1" fill="#f0e8e8"/><rect x="309" y="98" width="4" height="1" fill="#109090"/><rect x="313" y="98" width="1" height="1" fill="#000"/><rect x="301" y="99" width="1" height="1" fill="#000"/><rect x="302" y="99" width="1" height="1" fill="#109090"/><rect x="303" y="99" width="2" height="1" fill="#fafafa"/><rect x="305" y="99" width="2" height="1" fill="#c8c8c8"/><rect x="307" y="99" width="1" height="1" fill="#e8e0e0"/><rect x="308" y="99" width="4" height="1" fill="#109090"/><rect x="312" y="99" width="1" height="1" fill="#000"/><rect x="302" y="100" width="1" height="1" fill="#000"/><rect x="303" y="100" width="1" height="1" fill="#109090"/><rect x="304" y="100" width="1" height="1" fill="#fafafa"/><rect x="305" y="100" width="2" height="1" fill="#c8c8c8"/><rect x="307" y="100" width="4" height="1" fill="#109090"/><rect x="311" y="100" width="1" height="1" fill="#000"/><rect x="303" y="101" width="1" height="1" fill="#000"/><rect x="304" y="101" width="1" height="1" fill="#109090"/><rect x="305" y="101" width="2" height="1" fill="#c8c8c8"/><rect x="307" y="101" width="3" height="1" fill="#109090"/><rect x="310" y="101" width="1" height="1" fill="#000"/><rect x="304" y="102" width="1" height="1" fill="#000"/><rect x="305" y="102" width="2" height="1" fill="#d0d0d0"/><rect x="307" y="102" width="2" height="1" fill="#109090"/><rect x="309" y="102" width="1" height="1" fill="#000"/><rect x="305" y="103" width="1" height="1" fill="#000"/><rect x="306" y="103" width="2" height="1" fill="#f8f8f8"/><rect x="308" y="103" width="1" height="1" fill="#000"/><rect x="305" y="104" width="1" height="1" fill="#000"/><rect x="306" y="104" width="2" height="1" fill="#f0f0f0"/><rect x="308" y="104" width="1" height="1" fill="#000"/><rect x="305" y="105" width="1" height="1" fill="#000"/><rect x="306" y="105" width="2" height="1" fill="#109090"/><rect x="308" y="105" width="1" height="1" fill="#000"/><rect x="305" y="106" width="1" height="1" fill="#000"/><rect x="306" y="106" width="2" height="1" fill="#109090"/><rect x="308" y="106" width="1" height="1" fill="#000"/><rect x="305" y="107" width="4" height="1" fill="#000"/></svg>
<!-- up/down buttons -->
<div class="a" style="left:7px;top:206px;width:18px;height:18px;background:#dcdcdc;border:1px solid #6e6e6e"></div>
<div class="a" style="left:7px;top:228px;width:18px;height:18px;background:#dcdcdc;border:1px solid #6e6e6e"></div>
<svg class="a" style="left:8px;top:207px" width="16" height="16">
<path d="M8,1 L14.5,7.5 L11,7.5 L11,14 L5,14 L5,7.5 L1.5,7.5 Z" fill="#58d858" stroke="#108010" stroke-width="1" stroke-linejoin="round"/>
<path d="M8,3 L12,7 L9.5,7 L9.5,12" stroke="#a8f0a0" stroke-width="1" fill="none"/>
</svg>
<svg class="a" style="left:8px;top:229px" width="16" height="16">
<path d="M8,15 L14.5,8.5 L11,8.5 L11,2 L5,2 L5,8.5 L1.5,8.5 Z" fill="#58d858" stroke="#108010" stroke-width="1" stroke-linejoin="round"/>
<path d="M6.5,3 L6.5,9.5 L4,9.5 L8,13" stroke="#a8f0a0" stroke-width="1" fill="none"/>
</svg>
<!-- doc icon in grid 2 -->
<svg class="a" style="left:99px;top:223px" width="13" height="13" shape-rendering="crispEdges">
<rect x="0" y="0" width="12" height="13" fill="#3a68c0"/>
<rect x="1" y="1" width="10" height="11" fill="#f4f8ff"/>
<rect x="1" y="1" width="10" height="2" fill="#88b0e8"/>
<rect x="3" y="4" width="6" height="1" fill="#606878"/>
<rect x="3" y="6" width="6" height="1" fill="#606878"/>
<rect x="3" y="8" width="6" height="1" fill="#606878"/>
<rect x="3" y="10" width="6" height="1" fill="#606878"/>
</svg>
<!-- fx -->
<svg class="a" style="left:404px;top:220px" width="20" height="16">
<path d="M5.5,14.5 Q7,15 8,12 L10,5 Q11,2.8 13,3.2" stroke="#000" stroke-width="1.3" fill="none"/>
<circle cx="12.8" cy="3.8" r="1" fill="#000"/>
<path d="M7.5,6.5 L11.5,6.5" stroke="#000" stroke-width="1" fill="none"/>
<path d="M10.5,9.5 Q12,8.5 13,10 L14.5,13.5 Q15.5,14 16.5,13" stroke="#000" stroke-width="1.4" fill="none"/>
<path d="M16.5,9 L11,13.5" stroke="#000" stroke-width="1.1" fill="none"/>
</svg>
<!-- left MDI bar widths -->
<div class="a" style="left:0;top:182px;width:2px;height:105px;background:#8c8e98"></div>
<div class="a" style="left:0;top:291px;width:3px;height:239px;background:#8c8e98"></div>
<svg class="a" style="left:444px;top:336px" width="7" height="4" shape-rendering="crispEdges"><rect x="0" y="0" width="7" height="1"/><rect x="1" y="1" width="5" height="1"/><rect x="2" y="2" width="3" height="1"/><rect x="3" y="3" width="1" height="1"/></svg><div class="a" style="left:457px;top:343px;width:5px;height:1px;background:repeating-linear-gradient(90deg,#707070 0 1px,transparent 1px 2px)"></div>
<svg class="a" style="left:135px;top:507px" width="7" height="4" shape-rendering="crispEdges"><rect x="0" y="0" width="7" height="1"/><rect x="1" y="1" width="5" height="1"/><rect x="2" y="2" width="3" height="1"/><rect x="3" y="3" width="1" height="1"/></svg><div class="a" style="left:148px;top:514px;width:5px;height:1px;background:repeating-linear-gradient(90deg,#707070 0 1px,transparent 1px 2px)"></div>
<svg class="a" style="left:601px;top:507px" width="7" height="4" shape-rendering="crispEdges"><rect x="0" y="0" width="7" height="1"/><rect x="1" y="1" width="5" height="1"/><rect x="2" y="2" width="3" height="1"/><rect x="3" y="3" width="1" height="1"/></svg><div class="a" style="left:614px;top:514px;width:5px;height:1px;background:repeating-linear-gradient(90deg,#707070 0 1px,transparent 1px 2px)"></div>
</body></html>
